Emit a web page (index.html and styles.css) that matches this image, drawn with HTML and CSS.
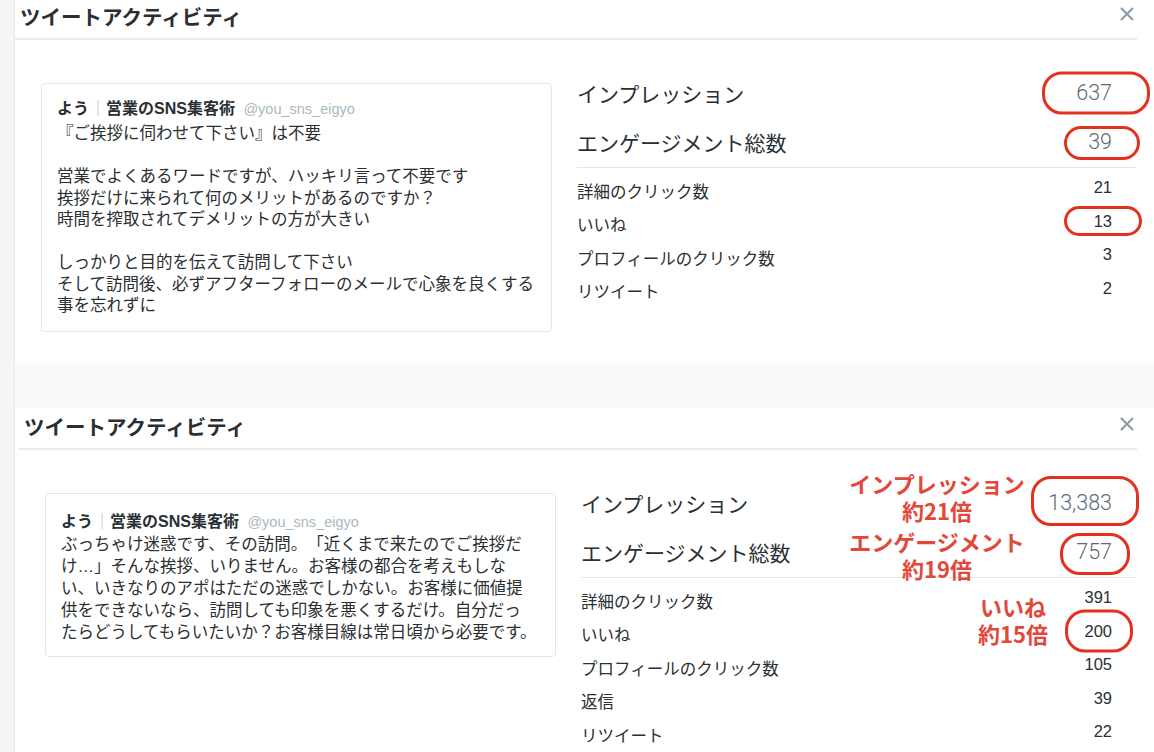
FILE: index.html
```html
<!DOCTYPE html>
<html lang="ja">
<head>
<meta charset="utf-8">
<title>ツイートアクティビティ</title>
<link rel="stylesheet" href="styles.css">
</head>
<body>
<div class="page">
  <div class="rail"></div>
  <main class="main">
    <section class="panel panel--first">
      <header class="panel-head">
        <h2 class="panel-title">ツイートアクティビティ</h2>
        <button class="close" aria-label="閉じる"><svg viewBox="0 0 14 14" width="14" height="14"><path d="M1.5 1.5 L12.5 12.5 M12.5 1.5 L1.5 12.5"/></svg></button>
      </header>
      <div class="panel-body">
        <article class="tweet">
          <p class="tweet-author"><span class="name">よう</span><span class="bar">｜</span><span class="name">営業のSNS集客術</span> <span class="handle">@you_sns_eigyo</span></p>
          <p class="tweet-text">『ご挨拶に伺わせて下さい』は不要<br><br>営業でよくあるワードですが、ハッキリ言って不要です<br>挨拶だけに来られて何のメリットがあるのですか？<br>時間を搾取されてデメリットの方が大きい<br><br>しっかりと目的を伝えて訪問して下さい<br>そして訪問後、必ずアフターフォローのメールで心象を良くする<br>事を忘れずに</p>
        </article>
        <div class="stats">
          <div class="stat-main-group">
            <div class="stat-main"><span class="label-lg">インプレッション</span><span class="value-lg">637<span class="ring ring--a"></span></span></div>
            <div class="stat-main"><span class="label-lg">エンゲージメント総数</span><span class="value-lg">39<span class="ring ring--b"></span></span></div>
          </div>
          <div class="stat-rows">
            <div class="stat-row"><span class="label-sm">詳細のクリック数</span><span class="value-sm">21</span></div>
            <div class="stat-row"><span class="label-sm">いいね</span><span class="value-sm">13<span class="ring ring--c"></span></span></div>
            <div class="stat-row"><span class="label-sm">プロフィールのクリック数</span><span class="value-sm">3</span></div>
            <div class="stat-row"><span class="label-sm">リツイート</span><span class="value-sm">2</span></div>
          </div>
        </div>
      </div>
    </section>
    <div class="band"></div>
    <section class="panel panel--second">
      <header class="panel-head">
        <h2 class="panel-title">ツイートアクティビティ</h2>
        <button class="close" aria-label="閉じる"><svg viewBox="0 0 14 14" width="14" height="14"><path d="M1.5 1.5 L12.5 12.5 M12.5 1.5 L1.5 12.5"/></svg></button>
      </header>
      <div class="panel-body">
        <article class="tweet tweet--second">
          <p class="tweet-author"><span class="name">よう</span><span class="bar">｜</span><span class="name">営業のSNS集客術</span> <span class="handle">@you_sns_eigyo</span></p>
          <p class="tweet-text">ぶっちゃけ迷惑です、その訪問。「近くまで来たのでご挨拶だ<br>け…」そんな挨拶、いりません。お客様の都合を考えもしな<br>い、いきなりのアポはただの迷惑でしかない。お客様に価値提<br>供をできないなら、訪問しても印象を悪くするだけ。自分だっ<br>たらどうしてもらいたいか？お客様目線は常日頃から必要です。</p>
        </article>
        <div class="stats">
          <div class="stat-main-group">
            <div class="stat-main"><span class="label-lg">インプレッション</span><span class="value-lg">13,383<span class="ring ring--d"></span></span></div>
            <div class="stat-main"><span class="label-lg">エンゲージメント総数</span><span class="value-lg">757<span class="ring ring--e"></span></span></div>
          </div>
          <div class="stat-rows">
            <div class="stat-row"><span class="label-sm">詳細のクリック数</span><span class="value-sm">391</span></div>
            <div class="stat-row"><span class="label-sm">いいね</span><span class="value-sm">200<span class="ring ring--f"></span></span></div>
            <div class="stat-row"><span class="label-sm">プロフィールのクリック数</span><span class="value-sm">105</span></div>
            <div class="stat-row"><span class="label-sm">返信</span><span class="value-sm">39</span></div>
            <div class="stat-row"><span class="label-sm">リツイート</span><span class="value-sm">22</span></div>
          </div>
          <div class="note note--imp"><span>インプレッション</span><span>約21倍</span></div>
          <div class="note note--eng"><span>エンゲージメント</span><span>約19倍</span></div>
          <div class="note note--like"><span>いいね</span><span>約15倍</span></div>
        </div>
      </div>
    </section>
  </main>
</div>
</body>
</html>
```

FILE: styles.css
```css
* { box-sizing: border-box; margin: 0; padding: 0; }
html, body { height: 100%; }
body {
  background: #fff;
  font-family: "Liberation Sans", "Noto Sans CJK JP", sans-serif;
  color: #292f33;
  overflow: hidden;
  text-spacing-trim: space-all;
}
.page { display: flex; height: 752px; }
.rail {
  width: 15px;
  flex: none;
  background: #f6f4f5;
  border-right: 1px solid #ece9ea;
}
.main { flex: 1; display: flex; flex-direction: column; min-width: 0; }
.panel { background: #fff; }
.panel--first { height: 363px; flex: none; }
.band { height: 45px; flex: none; background: #fafafa; }
.panel--second { flex: 1; padding-left: 4px; padding-top: 2px; }

.panel-head {
  display: flex;
  justify-content: space-between;
  align-items: center;
  height: 40px;
  border-bottom: 2px solid #e6ecf0;
  margin-right: 17px;
  padding: 0 3px 6px 5px;
}
.panel-title {
  font-size: 20.5px;
  font-weight: 700;
  line-height: 26px;
  color: #292f33;
  font-family: "Noto Sans CJK JP", sans-serif;
}
.close {
  border: 0;
  background: none;
  width: 14px;
  height: 14px;
  margin-bottom: 4px;
  display: flex;
}
.close svg { stroke: #8899a6; stroke-width: 2; stroke-linecap: round; fill: none; }

.panel-body {
  display: flex;
  align-items: flex-start;
  padding: 28px 17px 0 26px;
}
.tweet {
  width: 511px;
  flex: none;
  margin-top: 15px;
  border: 1px solid #e1e8ed;
  border-radius: 4px;
  padding: 12px 15px 14px;
}
.tweet-author {
  font-size: 16px;
  line-height: 22px;
  white-space: nowrap;
}
.tweet-author .name { font-weight: 700; color: #292f33; }
.tweet-author .bar {
  display: inline-block;
  width: 16px;
  text-align: center;
  color: #b5bec6;
  font-weight: 400;
  margin: 0 0 0 1px;
  font-family: "Noto Sans CJK JP", sans-serif;
}
.tweet-author .handle { color: #aab8c2; font-size: 14.5px; margin-left: 4px; }
.tweet-text {
  margin-top: 3px;
  font-size: 16.5px;
  line-height: 21.5px;
  white-space: nowrap;
  color: #292f33;
}
.tweet--second { padding: 15px 15px 13px; }
.tweet--second .tweet-text { margin-top: 0; line-height: 22px; }

.stats {
  flex: 1;
  margin-left: 25px;
  position: relative;
}
.stat-main-group { border-bottom: 1px solid #e1e8ed; }
.stat-main {
  display: flex;
  justify-content: space-between;
  align-items: center;
  height: 49.5px;
  padding-right: 25px;
}
.label-lg {
  font-size: 21px;
  line-height: 28px;
  font-family: "Noto Sans CJK JP", sans-serif;
  color: #292f33;
}
.value-lg {
  position: relative;
  font-family: Roboto, "Liberation Sans", sans-serif;
  font-weight: 300;
  font-size: 21.5px;
  line-height: 26px;
  color: #5c6a74;
}
.stat-rows { padding-top: 6px; }
.stat-row {
  display: flex;
  justify-content: space-between;
  align-items: center;
  height: 33.5px;
  padding-right: 25px;
}
.label-sm {
  font-size: 16.5px;
  line-height: 22px;
  font-family: "Noto Sans CJK JP", sans-serif;
  color: #292f33;
}
.value-sm {
  position: relative;
  font-size: 16.5px;
  line-height: 20px;
  margin-bottom: 7px;
  color: #292f33;
}

.ring {
  position: absolute;
  left: 50%;
  top: 50%;
  transform: translate(-50%, -50%);
  border: 3.5px solid #e3311d;
  border-radius: 20px;
  pointer-events: none;
}
.ring--a { width: 108px; height: 43px; margin-left: 2px; }
.ring--b { width: 76px; height: 34px; margin-left: 2px; margin-top: 1px; }
.ring--c { width: 78px; height: 30px; }
.ring--d { width: 108px; height: 50px; margin-left: 5px; margin-top: -2px; }
.ring--e { width: 70px; height: 42px; margin-left: 1px; margin-top: 2px; }
.ring--f { width: 68px; height: 43px; margin-left: 1px; }

.note {
  position: absolute;
  display: flex;
  flex-direction: column;
  align-items: center;
  color: #e2473a;
  font-family: "Noto Sans CJK JP", sans-serif;
  font-weight: 700;
  font-size: 22px;
  white-space: nowrap;
}
.note span { display: block; height: 27px; line-height: 27px; overflow: visible; }
.note--imp { left: 256px; top: -8px; width: 200px; }
.note--eng { left: 256px; top: 50px; width: 200px; }
.note--like { left: 382px; top: 115px; width: 100px; }
```
